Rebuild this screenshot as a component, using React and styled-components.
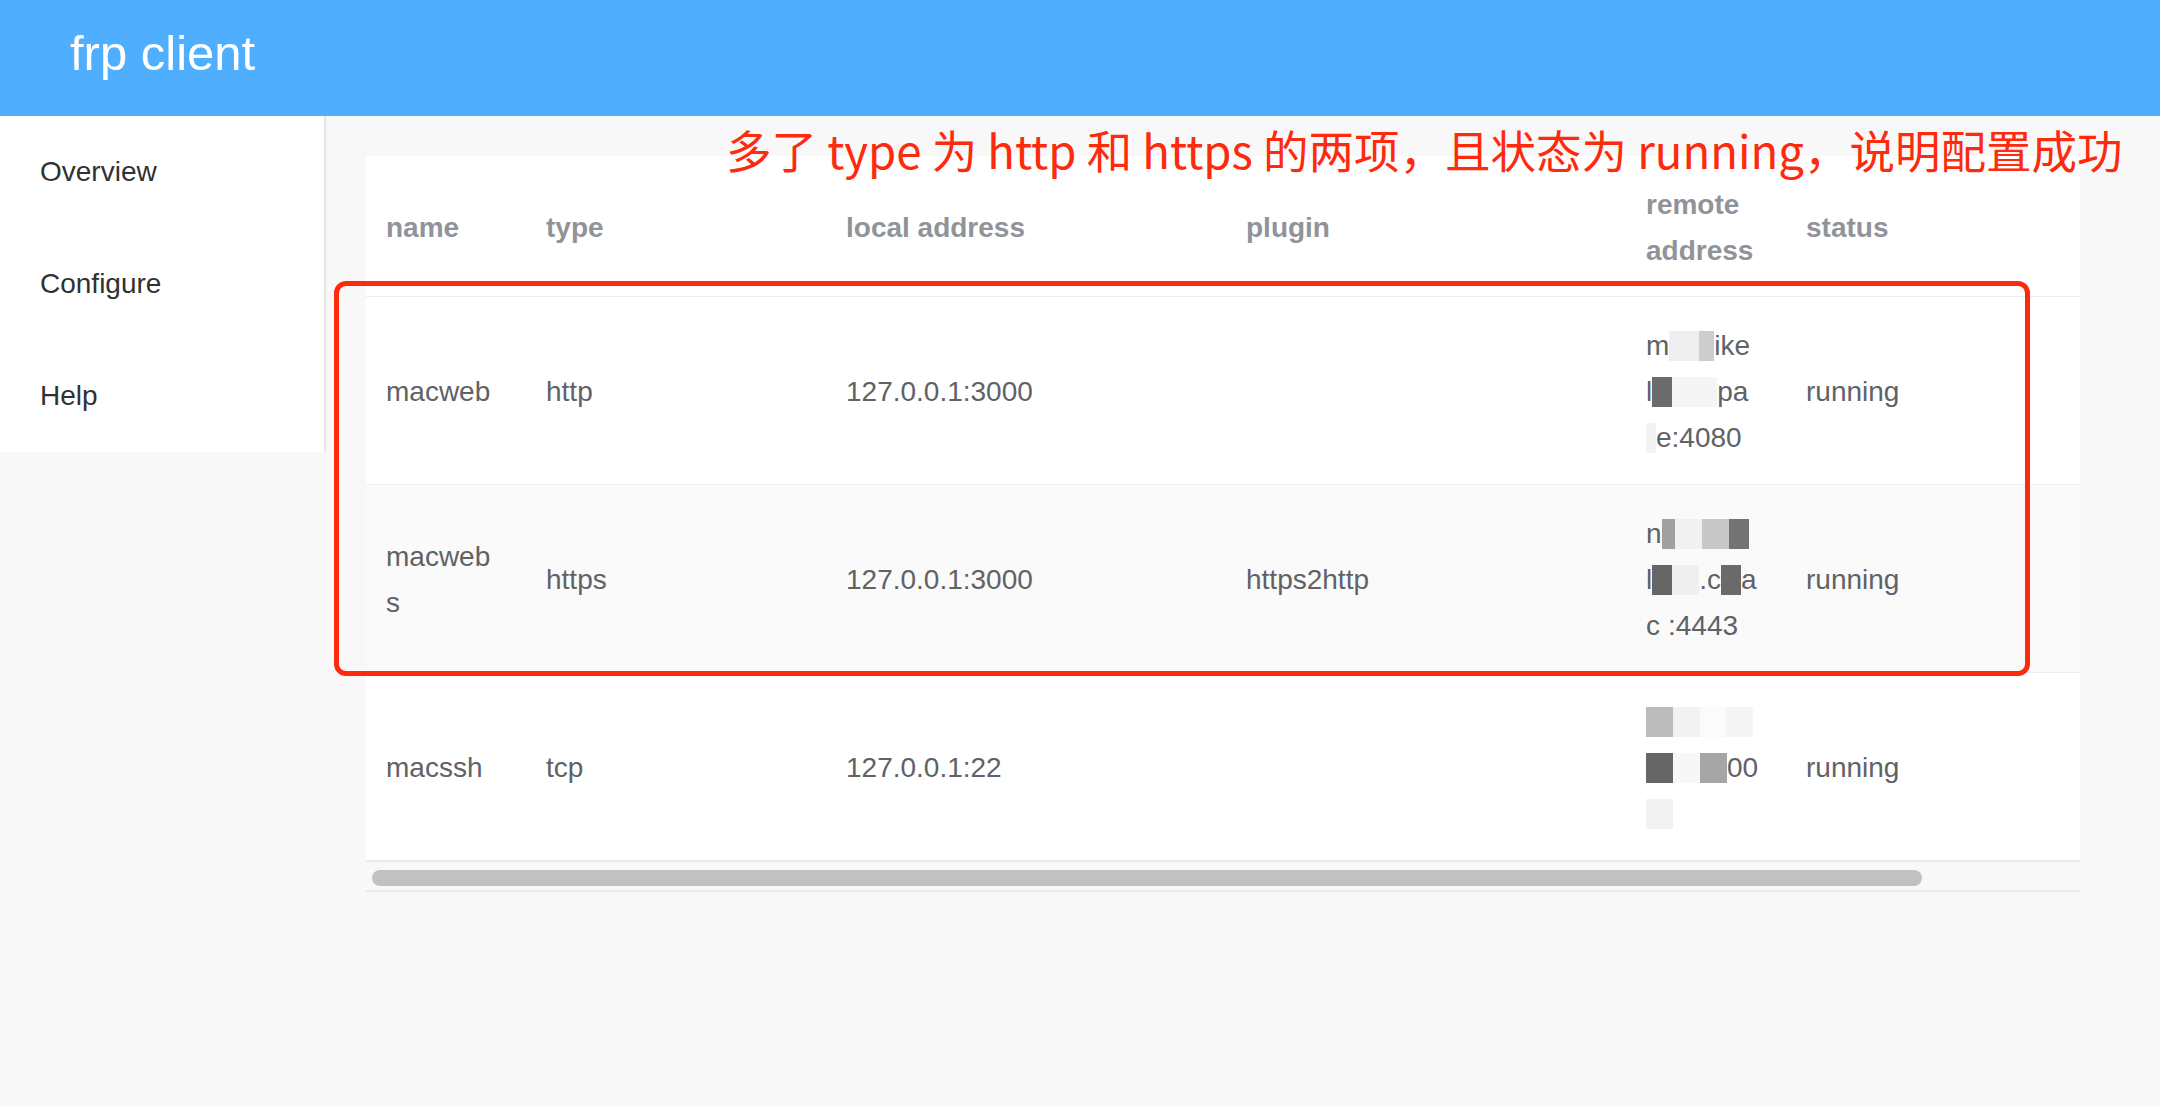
import styled, { createGlobalStyle } from "styled-components";

const GlobalStyle = createGlobalStyle`
    html, body {
        margin: 0;
        padding: 0;
        background: #f8f8f8;
        font-family: "Liberation Sans", Arial, sans-serif;
    }
    * {
        box-sizing: border-box;
    }
`

const Header = styled.div`
    height: 116px;
    background: #50aeff;
    padding: 0 0 10px 70px;
    display: flex;
    align-items: center;
`

const Brand = styled.div`
    color: #fff;
    font-size: 49px;
    line-height: 1;
`

const Body = styled.div`
    display: flex;
    align-items: flex-start;
`

const Sidebar = styled.div`
    width: 326px;
    flex-shrink: 0;
    background: #fff;
    border-right: 2px solid #e4e4e4;
`

const MenuItem = styled.div`
    height: 112px;
    line-height: 112px;
    padding-left: 40px;
    font-size: 28px;
    color: #303133;
`

const Main = styled.div`
    position: relative;
    flex: 1;
    min-width: 0;
    padding: 40px 80px 0 40px;
`

const Card = styled.div`
    width: 100%;
    overflow: hidden;
`

const Table = styled.div`
    width: 1896px;
    background: #fff;
`

const Row = styled.div`
    display: grid;
    grid-template-columns: 160px 300px 400px 400px 160px 160px 316px;
    align-items: center;
    height: ${({ $h }) => $h}px;
    background: ${({ $striped }) => ($striped ? "#fafafa" : "#fff")};
    border-bottom: 1px solid #ebeef5;
`

const HeadCell = styled.div`
    padding: 3px 20px 0;
    font-size: 28px;
    line-height: 46px;
    font-weight: bold;
    color: #909399;
`

const Cell = styled.div`
    padding: 3px 20px 0;
    font-size: 28px;
    line-height: 46px;
    color: #606266;
    word-break: break-all;
    max-width: ${({ $max }) => ($max ? `${$max}px` : "none")};
`

const Line = styled.div`
    display: flex;
    align-items: center;
    height: 46px;
    white-space: nowrap;
`

const Mask = styled.span`
    display: inline-block;
    height: 30px;
    width: ${({ $w }) => $w}px;
    background: ${({ $c }) => $c};
`

const Track = styled.div`
    height: 31px;
    padding: 8px 0 0 6px;
    background: #f8f8f8;
    border-top: 1px solid #e6e8ee;
    border-bottom: 2px solid #e8eaf1;
`

const Thumb = styled.div`
    width: 1550px;
    height: 16px;
    border-radius: 8px;
    background: #c1c1c1;
`

const Note = styled.div`
    position: absolute;
    left: 400px;
    top: 10px;
    font-family: "Noto Sans CJK SC", "Noto Sans", sans-serif;
    font-size: 45.5px;
    line-height: 46px;
    color: #fd2a0e;
    white-space: nowrap;
`

const Frame = styled.div`
    position: absolute;
    left: 8px;
    top: 165px;
    width: 1696px;
    height: 395px;
    border: 5px solid #fd2a0e;
    border-radius: 12px;
    pointer-events: none;
`

const rows = [
    {
        name: "macweb", type: "http", local: "127.0.0.1:3000", plugin: "",
        remote: [
            ["m", ["#efefef", 30], ["#cdcdcd", 15], "ike"],
            ["l", ["#6b6b6b", 20], ["#f5f5f5", 45], "pa"],
            [["#f3f3f3", 10], "e:4080"],
        ],
    },
    {
        name: "macwebs", type: "https", local: "127.0.0.1:3000", plugin: "https2http",
        remote: [
            ["n", ["#a0a0a0", 13], ["#f1f1f1", 27], ["#c8c8c8", 27], ["#737373", 20]],
            ["l", ["#666666", 20], ["#efefef", 27], ".c", ["#6a6a6a", 20], "a"],
            ["c", ["#fafafa", 8], ":4443"],
        ],
    },
    {
        name: "macssh", type: "tcp", local: "127.0.0.1:22", plugin: "",
        remote: [
            [["#bcbcbc", 27], ["#f2f2f2", 27], ["#fbfbfb", 26], ["#f5f5f5", 27]],
            [["#666666", 27], ["#f7f7f7", 27], ["#a6a6a6", 27], "00"],
            [["#f2f2f2", 27]],
        ],
    },
]

const Remote = ({ lines }) => (
    <Cell>
        {lines.map((parts, i) => (
            <Line key={i}>
                {parts.map((p, j) =>
                    typeof p === "string" ? <span key={j}>{p}</span> : <Mask key={j} $c={p[0]} $w={p[1]} />
                )}
            </Line>
        ))}
    </Cell>
)

const App = () => {

    return (
        <>
            <GlobalStyle />
            <Header>
                <Brand>frp client</Brand>
            </Header>
            <Body>
                <Sidebar>
                    <MenuItem>Overview</MenuItem>
                    <MenuItem>Configure</MenuItem>
                    <MenuItem>Help</MenuItem>
                </Sidebar>
                <Main>
                    <Card>
                        <Table>
                            <Row $h={141}>
                                <HeadCell>name</HeadCell>
                                <HeadCell>type</HeadCell>
                                <HeadCell>local address</HeadCell>
                                <HeadCell>plugin</HeadCell>
                                <HeadCell>remote address</HeadCell>
                                <HeadCell>status</HeadCell>
                                <HeadCell></HeadCell>
                            </Row>
                            {rows.map((r, i) => (
                                <Row key={r.name} $h={188} $striped={i % 2 === 1}>
                                    <Cell $max={156}>{r.name}</Cell>
                                    <Cell>{r.type}</Cell>
                                    <Cell>{r.local}</Cell>
                                    <Cell>{r.plugin}</Cell>
                                    <Remote lines={r.remote} />
                                    <Cell>running</Cell>
                                    <Cell></Cell>
                                </Row>
                            ))}
                        </Table>
                        <Track>
                            <Thumb />
                        </Track>
                    </Card>
                    <Frame />
                    <Note>多了 type 为 http 和 https 的两项，且状态为 running，说明配置成功</Note>
                </Main>
            </Body>
        </>
    )

}

export default App;
